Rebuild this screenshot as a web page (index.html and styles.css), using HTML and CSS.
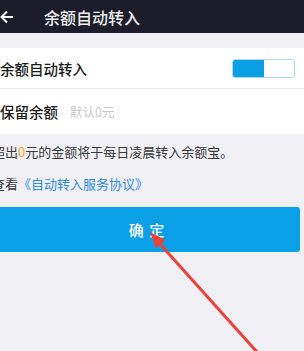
FILE: index.html
```html
<!DOCTYPE html>
<html>
	<head>
		<meta charset="utf-8" />
		<meta name="viewport" content="width=device-width">
		<title>余额自动转入</title>
		<link rel="stylesheet" href="styles.css">
	</head>
	<body>
		<div class="topbar">
			<svg class="back" width="14" height="14" viewBox="0 0 14 14">
				<path d="M13 7H2M7 1.5L1.5 7 7 12.5" fill="none" stroke="#fff" stroke-width="2"/>
			</svg>
			<h1 class="topbar-tit">余额自动转入</h1>
		</div>
		<ul class="form">
			<li class="form-row form-row-line">
				<span class="form-label">余额自动转入</span>
				<span class="switch"><i class="switch-on"></i></span>
			</li>
			<li class="form-row">
				<span class="form-label">保留余额</span>
				<span class="form-input">默认0元</span>
			</li>
		</ul>
		<p class="tip">超出<em>0</em>元的金额将于每日凌晨转入余额宝。</p>
		<p class="tip tip-link">查看<a>《自动转入服务协议》</a></p>
		<button class="btn">确 定</button>
		<!--红色箭头-->
		<svg class="pointer" width="304" height="351" viewBox="0 0 304 351">
			<line x1="257" y1="352" x2="160" y2="244" stroke="#e8433b" stroke-width="3"/>
			<polygon points="150,232 165.5,240 156,248.5" fill="#e8433b"/>
		</svg>
	</body>
</html>
```

FILE: styles.css
```css
/*初始化样式*/

* {
	padding: 0;
	margin: 0;
	-webkit-tap-highlight-color: transparent;
}

html,
body {
	height: 100%;
}

body {
	position: relative;
	overflow: hidden;
	background: #efeff4;
	font-family: "Noto Sans CJK SC", "Noto Sans", sans-serif;
	color: #222;
}

ul {
	list-style: none;
}

/*顶部导航*/

.topbar {
	display: flex;
	align-items: center;
	height: 33px;
	background: #1d1c2a;
}

.back {
	display: block;
	margin-left: 0;
}

.topbar-tit {
	margin-left: 30px;
	font-size: 16px;
	font-weight: 500;
	color: #eee;
}

/*表单*/

.form {
	margin-top: 15px;
	background: #fff;
}

.form-row {
	display: flex;
	align-items: center;
	height: 45px;
	padding-right: 9px;
}

.form-row-line {
	height: 40px;
	border-bottom: 1px solid #ececec;
}

.form-label {
	font-size: 14.5px;
	font-weight: 500;
	color: #1a1a1a;
}

.form-input {
	margin-left: 12px;
	font-size: 12.5px;
	color: #c9c9c9;
}

.switch {
	display: flex;
	margin-left: auto;
	width: 61px;
	height: 17px;
	border: 1px solid #a9d8ef;
	border-radius: 3px;
	background: #fff;
	overflow: hidden;
}

.switch-on {
	width: 31px;
	background: #0a9ee5;
}

/*提示*/

.tip {
	margin-left: -8px;
	margin-top: 8px;
	font-size: 13px;
	line-height: 20px;
	color: #3a3a3a;
}

.tip em {
	font-style: normal;
	color: #f5a623;
}

.tip-link {
	margin-top: 12px;
}

.tip-link a {
	color: #2e8de0;
}

.btn {
	display: block;
	margin: 13px 0 0 -6px;
	width: 306px;
	height: 45px;
	border: none;
	border-radius: 3px;
	background: #09a0e8;
	font-family: "Noto Sans CJK SC", "Noto Sans", sans-serif;
	font-size: 15px;
	font-weight: 500;
	color: #fff;
	letter-spacing: 1px;
}

.pointer {
	position: absolute;
	top: 0;
	left: 0;
	pointer-events: none;
}
```
